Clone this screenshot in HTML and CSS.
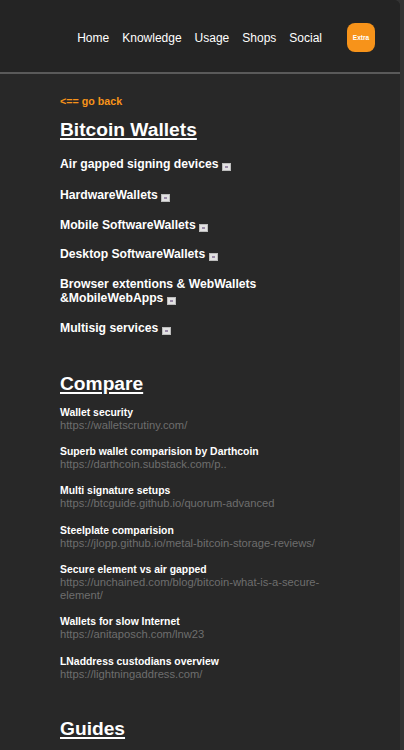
FILE: index.html
```html
<!DOCTYPE html>
<html>
<head>
<meta charset="utf-8">
<link rel="stylesheet" href="styles.css">
</head>
<body>
<div class="page">
  <header class="topbar">
    <nav class="nav">
      <a href="#">Home</a>
      <a href="#">Knowledge</a>
      <a href="#">Usage</a>
      <a href="#">Shops</a>
      <a href="#">Social</a>
    </nav>
    <button class="extra">Extra</button>
  </header>
  <main class="content">
    <a class="back" href="#">&lt;== go back</a>
    <h2 class="section-title first">Bitcoin Wallets</h2>
    <ul class="cats">
      <li>Air gapped signing devices <span class="drop"></span></li>
      <li>HardwareWallets <span class="drop"></span></li>
      <li>Mobile SoftwareWallets <span class="drop"></span></li>
      <li>Desktop SoftwareWallets <span class="drop"></span></li>
      <li>Browser extentions &amp; WebWallets<br>&amp;MobileWebApps <span class="drop"></span></li>
      <li>Multisig services <span class="drop"></span></li>
    </ul>
    <h2 class="section-title">Compare</h2>
    <ul class="links">
      <li><div class="lt">Wallet security</div><div class="lu">https://walletscrutiny.com/</div></li>
      <li><div class="lt">Superb wallet comparision by Darthcoin</div><div class="lu">https://darthcoin.substack.com/p..</div></li>
      <li><div class="lt">Multi signature setups</div><div class="lu">https://btcguide.github.io/quorum-advanced</div></li>
      <li><div class="lt">Steelplate comparision</div><div class="lu">https://jlopp.github.io/metal-bitcoin-storage-reviews/</div></li>
      <li><div class="lt">Secure element vs air gapped</div><div class="lu">https://unchained.com/blog/bitcoin-what-is-a-secure-<br>element/</div></li>
      <li><div class="lt">Wallets for slow Internet</div><div class="lu">https://anitaposch.com/lnw23</div></li>
      <li><div class="lt">LNaddress custodians overview</div><div class="lu">https://lightningaddress.com/</div></li>
    </ul>
    <h2 class="section-title">Guides</h2>
  </main>
</div>
</body>
</html>
```

FILE: styles.css
```css
html, body {
  margin: 0;
  padding: 0;
  background: #333333;
  font-family: "Liberation Sans", Arial, sans-serif;
}
.page {
  width: 400px;
  min-height: 750px;
  background: #282828;
  border-top-right-radius: 6px;
  overflow: hidden;
}
.topbar {
  height: 72px;
  background: #242424;
  border-bottom: 2px solid #5a5a5a;
  display: flex;
  align-items: center;
  justify-content: flex-end;
  padding-right: 25px;
  gap: 25px;
}
.nav {
  display: flex;
  gap: 13px;
  margin-top: 3px;
}
.nav a {
  color: #ffffff;
  text-decoration: none;
  font-size: 12px;
}
.extra {
  width: 28px;
  height: 29px;
  border: none;
  border-radius: 8px;
  background: #f7931a;
  color: #ffffff;
  font-family: "Liberation Sans", Arial, sans-serif;
  font-size: 6.5px;
  font-weight: bold;
  padding: 0;
  margin-top: 3px;
}
.content {
  padding: 21px 0 0 60px;
}
.back {
  display: block;
  color: #f7931a;
  font-size: 10.7px;
  font-weight: bold;
  line-height: 12px;
  text-decoration: none;
}
.section-title {
  margin: 38px 0 0;
  font-size: 19.2px;
  line-height: 22px;
  color: #ffffff;
  text-decoration: underline;
  text-decoration-thickness: 2px;
  text-underline-offset: 2px;
}
.section-title.first {
  margin-top: 12px;
}
.cats {
  list-style: none;
  margin: 16px 0 2px;
  padding: 0;
}
.cats li {
  color: #ffffff;
  font-size: 12.2px;
  font-weight: bold;
  line-height: 14px;
  margin-top: 15.6px;
}
.cats li:first-child {
  margin-top: 0;
}
.cats li:nth-child(2) {
  margin-top: 17px;
}
.cats li:last-child {
  margin-top: 16.4px;
}
.drop {
  display: inline-block;
  width: 7px;
  height: 6px;
  background: #e2e2e2;
  border: 1px solid #bcbcbc;
  position: relative;
  vertical-align: -3px;
}
.drop::after {
  content: "";
  position: absolute;
  left: 2px;
  top: 2px;
  width: 3px;
  height: 2px;
  background: #9a8aa8;
}
.links {
  list-style: none;
  margin: 10.5px 0 0;
  padding: 0;
}
.links li {
  margin-top: 14px;
}
.links li:first-child {
  margin-top: 0;
}
.lt {
  color: #ffffff;
  font-size: 10.4px;
  font-weight: bold;
  line-height: 13px;
}
.lu {
  color: #6e6e6e;
  font-size: 11.2px;
  line-height: 12.4px;
}
```
